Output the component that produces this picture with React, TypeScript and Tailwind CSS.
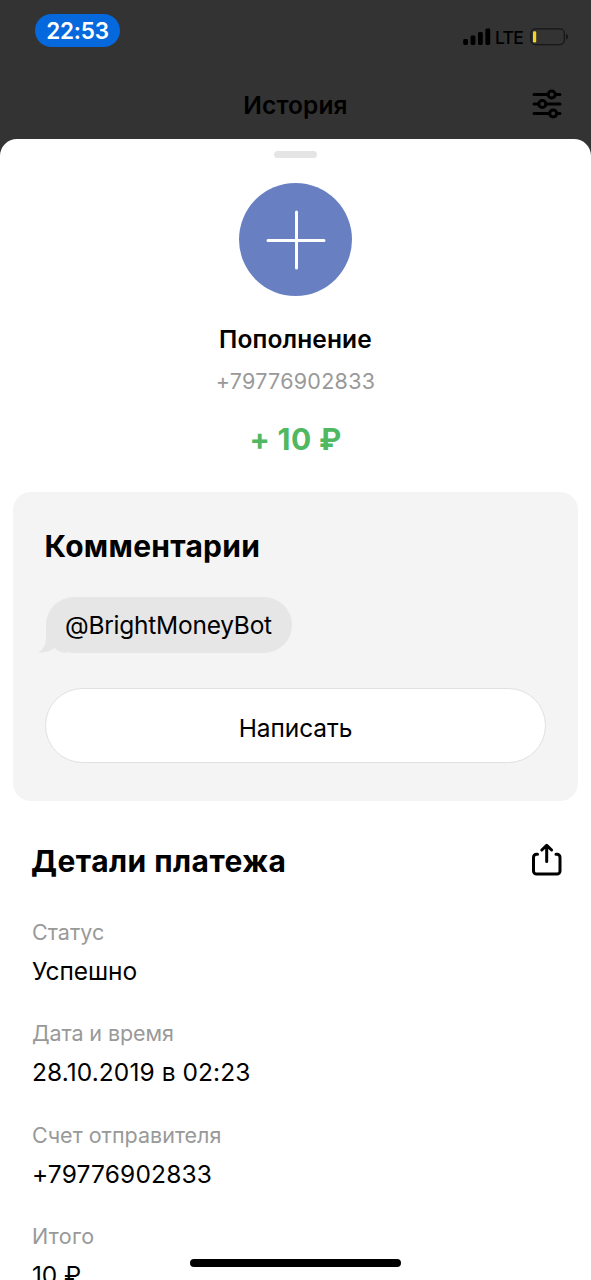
type Detail = { label: string; value: string; labelClass: string; valueClass: string };

const details: Detail[] = [
  { label: 'Статус', value: 'Успешно', labelClass: 'tracking-[0.04px]', valueClass: 'tracking-[-0.05px]' },
  { label: 'Дата и время', value: '28.10.2019 в 02:23', labelClass: 'tracking-[-0.1px]', valueClass: 'tracking-[0.08px]' },
  { label: 'Счет отправителя', value: '+79776902833', labelClass: 'tracking-[0px]', valueClass: 'tracking-[0.17px]' },
  { label: 'Итого', value: '10 ₽', labelClass: 'tracking-[0.3px]', valueClass: 'tracking-[-0.1px]' },
];

function SignalIcon() {
  return (
    <svg width="28" height="17" viewBox="0 0 28 17" fill="#000">
      <rect x="0.2" y="11" width="4.8" height="6" rx="1.4" />
      <rect x="7.6" y="7.6" width="4.8" height="9.4" rx="1.4" />
      <rect x="15" y="4" width="4.8" height="13" rx="1.4" />
      <rect x="22.4" y="0.4" width="4.8" height="16.6" rx="1.4" />
    </svg>
  );
}

function BatteryIcon() {
  return (
    <svg width="39" height="18" viewBox="0 0 39 18" fill="none">
      <rect x="0.9" y="0.9" width="33.4" height="15.8" rx="4.4" stroke="#171717" strokeWidth="1.3" />
      <path d="M36 5.8c1.3.5 2 1.6 2 3s-.7 2.500-2 3z" fill="#171717" />
      <rect x="3" y="3.200" width="3.200" height="11.300" rx="1.300" fill="#f5d426" />
    </svg>
  );
}

function FiltersIcon() {
  return (
    <svg width="30" height="30" viewBox="0 0 30 30" fill="none" stroke="#000" strokeWidth="3" strokeLinecap="round">
      <path d="M2 5.500h13M24.500 5.500H28M2 15h3.500M15 15h13M2 24.500h14.500M26 24.500h2" />
      <circle cx="19.700" cy="5.500" r="3.500" />
      <circle cx="10.300" cy="15" r="3.500" />
      <circle cx="21.200" cy="24.500" r="3.500" />
    </svg>
  );
}

function ShareIcon() {
  return (
    <svg width="30" height="33" viewBox="0 0 30 33" fill="none" stroke="#000" strokeWidth="3" strokeLinecap="round" strokeLinejoin="round">
      <path d="M5.500 11.200H4.500a3 3 0 0 0-3 3v13.800a3 3 0 0 0 3 3h20.500a3 3 0 0 0 3-3v-13.800a3 3 0 0 0-3-3H24" />
      <path d="M14.700 18.500V2.500M9.800 7l4.900-4.700 4.900 4.700" />
    </svg>
  );
}

export default function App() {
  return (
    <div className="flex h-[1280px] w-[591px] flex-col overflow-hidden bg-[#333333] font-['Inter',sans-serif] text-black">
      <header className="h-[139px] shrink-0">
        <div className="flex h-[64px] items-start justify-between pt-[14px] pr-[22px] pl-[35px]">
          <div className="flex h-[33px] w-[85px] items-center justify-center rounded-full bg-[#0668dd] text-[22.500px] font-semibold tracking-[-0.2px] text-white">
            22:53
          </div>
          <div className="flex items-start pt-[14px]">
            <SignalIcon />
            <span className="ml-[4px] w-[35px] text-[17.500px] leading-[20px] font-medium tracking-[-0.650px]">LTE</span>
            <BatteryIcon />
          </div>
        </div>
        <div className="grid grid-cols-[1fr_auto_1fr] items-start pt-[25px]">
          <span />
          <h1 className="pt-[1px] text-[24.500px] leading-[30px] font-semibold tracking-[0.1px]">История</h1>
          <div className="flex justify-end pr-[29px]">
            <FiltersIcon />
          </div>
        </div>
      </header>

      <main className="flex flex-1 flex-col rounded-t-[17px] bg-white pt-[12px]">
        <div className="h-[7px] w-[43px] shrink-0 self-center rounded-full bg-[#e5e5e5]" />
        <section className="mt-[25px] flex shrink-0 flex-col items-center">
          <div className="flex size-[113px] items-center justify-center rounded-full bg-[#687fc2]">
            <svg width="113" height="113" viewBox="0 0 113 113" stroke="#fff" strokeWidth="3" strokeLinecap="round">
              <path d="M29 57.500h56M57.500 29v56" />
            </svg>
          </div>
          <h2 className="mt-[28px] text-[24.500px] leading-[30px] font-semibold tracking-[0.13px]">Пополнение</h2>
          <p className="mt-[13px] text-[21.500px] leading-[28px] tracking-[0.28px] text-[#999999]">+79776902833</p>
          <p className="mt-[26px] text-[30px] leading-[36px] font-bold tracking-[0.35px] text-[#4fb860]">+ 10 ₽</p>
        </section>

        <section className="mx-[13px] mt-[35px] shrink-0 rounded-[18px] bg-[#f4f4f4] px-[32px] pt-[36px] pb-[38px]">
          <h2 className="-ml-[0.500px] text-[30px] leading-[36px] font-bold tracking-[0.28px]">Комментарии</h2>
          <div className="relative mt-[33px] ml-[1px] flex h-[56px] w-[245.500px] items-center rounded-[28px] bg-[#e6e6e6] pl-[19px] text-[24.500px] tracking-[-0.240px]">
            <svg className="absolute bottom-0 -left-2" width="34" height="30" viewBox="0 0 34 30" fill="#e6e6e6">
              <path d="M8 0v15c0 6.500-2.500 11.500-8 14.500 6.500.4 12-1.200 16.500-4.500 3 3 7 4.600 12 5L34 10z" />
            </svg>
            <span className="relative leading-[30px]">@BrightMoneyBot</span>
          </div>
          <button className="mt-[35px] flex h-[75px] w-[501px] items-center justify-center rounded-full border border-[#e0e0e0] bg-white pt-[5px] text-[24.500px] leading-[30px] tracking-[-0.1px]">
            Написать
          </button>
        </section>

        <section className="mt-[42px] shrink-0 pr-[29px] pl-[32px]">
          <div className="flex h-[36px] items-start justify-between">
            <h2 className="-ml-px text-[30px] leading-[36px] font-bold tracking-[0.44px]">Детали платежа</h2>
            <ShareIcon />
          </div>
          <dl className="mt-[39px] flex flex-col gap-[33.400px]">
            {details.map((d) => (
              <div key={d.label}>
                <dt className={`text-[21.500px] leading-[28px] text-[#999999] ${d.labelClass}`}>{d.label}</dt>
                <dd className={`mt-[10px] text-[24.500px] leading-[30px] ${d.valueClass}`}>{d.value}</dd>
              </div>
            ))}
          </dl>
        </section>
      </main>
      <div className="absolute top-[1259px] left-[190px] h-[8px] w-[211px] rounded-full bg-black" />
    </div>
  );
}
